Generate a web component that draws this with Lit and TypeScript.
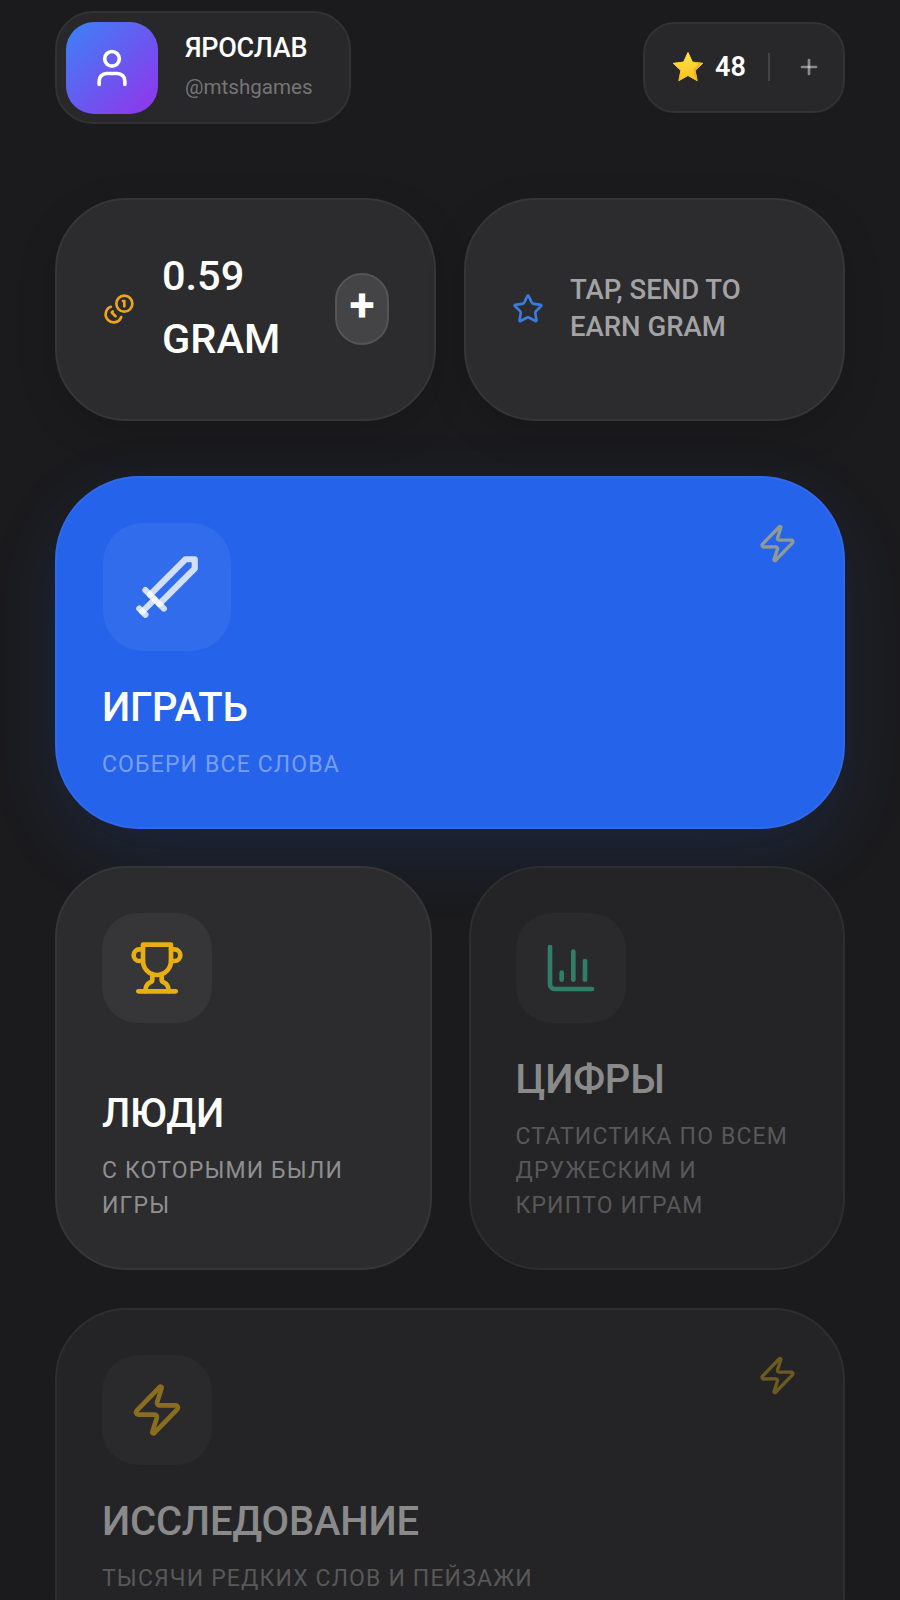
import { LitElement, html, css, svg } from "lit";
import { customElement } from "lit/decorators.js";

const icon = (size: number, body: unknown, cls = "") => html`<svg class=${cls} width=${size} height=${size} viewBox="0 0 24 24" fill="none" stroke="currentColor" stroke-width="2" stroke-linecap="round" stroke-linejoin="round">${body}</svg>`;

const zap = svg`<path d="M4 14a1 1 0 0 1-.78-1.63l9.9-10.2a.5.5 0 0 1 .86.46l-1.92 6.02A1 1 0 0 0 13 10h7a1 1 0 0 1 .78 1.63l-9.9 10.2a.5.5 0 0 1-.86-.46l1.92-6.02A1 1 0 0 0 11 14z"/>`;
const user = svg`<path d="M19 21v-2a4 4 0 0 0-4-4H9a4 4 0 0 0-4 4v2"/><circle cx="12" cy="7" r="4"/>`;
const coins = svg`<circle cx="16" cy="8" r="6"/><path d="M5.91 10.37A6 6 0 1 0 13.66 18"/><path d="M15 6h1v4"/><path d="M7.29 13.88l-.7.71 2.82 2.82"/>`;
const star = svg`<path d="M11.53 2.3a.53.53 0 0 1 .95 0l2.31 4.68a2.12 2.12 0 0 0 1.6 1.16l5.17.76a.53.53 0 0 1 .29.9l-3.74 3.64a2.12 2.12 0 0 0-.61 1.88l.88 5.14a.53.53 0 0 1-.77.56l-4.62-2.43a2.12 2.12 0 0 0-1.97 0L6.4 21.01a.53.53 0 0 1-.77-.56l.88-5.14a2.12 2.12 0 0 0-.61-1.88L2.16 9.79a.53.53 0 0 1 .29-.9l5.17-.76a2.12 2.12 0 0 0 1.6-1.16z"/>`;
const sword = svg`<polyline points="14.5 17.5 3 6 3 3 6 3 17.5 14.5"/><line x1="13" x2="19" y1="19" y2="13"/><line x1="16" x2="20" y1="16" y2="20"/><line x1="19" x2="21" y1="21" y2="19"/>`;
const trophy = svg`<path d="M6 9H4.5a2.5 2.5 0 0 1 0-5H6"/><path d="M18 9h1.5a2.5 2.5 0 0 0 0-5H18"/><path d="M4 22h16"/><path d="M10 14.66V17c0 .55-.47.98-.97 1.21C7.85 18.75 7 20.24 7 22"/><path d="M14 14.66V17c0 .55.47.98.97 1.21C16.15 18.75 17 20.24 17 22"/><path d="M18 2H6v7a6 6 0 0 0 12 0V2Z"/>`;
const chart = svg`<path d="M3 3v16a2 2 0 0 0 2 2h16"/><path d="M18 17V9"/><path d="M13 17V5"/><path d="M8 17v-3"/>`;
const plus = svg`<path d="M5 12h14" stroke-width="2.7"/><path d="M12 5v14" stroke-width="2.7"/>`;

@customElement("app-root")
export class AppRoot extends LitElement {
  static styles = css`
    :host {
      display: block;
      height: 1600px;
      overflow: hidden;
      background: #1b1b1d;
      font-family: Roboto, "Liberation Sans", sans-serif;
      color: #fff;
    }
    * { box-sizing: border-box; }
    .page { padding: 11px 55px 0; display: flex; flex-direction: column; }
    .header { display: flex; justify-content: space-between; align-items: center; height: 113px; }
    .user {
      display: flex; align-items: center; width: 296px; height: 113px; padding: 0 9px;
      gap: 27px; background: #28282a; border: 2px solid #323234; border-radius: 38px;
    }
    .avatar {
      width: 92px; height: 92px; border-radius: 28px; flex: none;
      display: flex; align-items: center; justify-content: center;
      background: linear-gradient(135deg, #3b82f6, #9333ea);
    }
    .who { padding-bottom: 3px; }
    .name { font-size: 27px; font-weight: 500; line-height: 36px; letter-spacing: -0.3px; }
    .handle { font-size: 20.6px; line-height: 30px; color: #757577; margin-top: 6px; }
    .stars {
      display: flex; align-items: center; width: 202px; height: 91px; padding: 0 0 2px 27px;
      background: #28282a; border: 2px solid #323234; border-radius: 32px;
    }
    .star-emoji { display: block; flex: none; }
    .count { font-size: 27px; font-weight: 600; margin-left: 11px; line-height: 34px; }
    .divider { width: 2px; height: 28px; background: #444446; margin-left: 22px; }
    .plus-s { margin-left: 27px; color: rgba(255,255,255,.45); display: flex; }

    .row { display: flex; margin-top: 74px; gap: 28px; }
    .mini {
      flex: 1; height: 223px; display: flex; align-items: center; padding: 0 45px 2px 46px;
      background: #2c2c2e; border: 2px solid #363638; border-radius: 72px;
      box-shadow: 0 12px 40px rgba(0,0,0,.14);
    }
    .mini svg { flex: none; }
    .coin { color: #eda51f; }
    .star-blue { color: #3b7be0; }
    .balance { flex: 1; margin-left: 27px; font-size: 41.5px; font-weight: 500; line-height: 63px; padding-bottom: 4px; }
    .add {
      flex: none; width: 54px; height: 72px; border-radius: 27px; background: #444446;
      border: 2px solid #555557; color: #fff; display: flex; justify-content: center;
      font-size: 46px; font-weight: 700; line-height: 60px;
    }
    .earn { flex: 1; margin-left: 26px; font-size: 27.5px; font-weight: 500; line-height: 36.5px; color: #a3a3a5; }

    .card {
      display: flex; flex-direction: column; position: relative;
      padding: 45px; border: 2px solid #363638; background: #2c2c2e; border-radius: 72px;
    }
    .play {
      margin-top: 55px; height: 353px; background: #2563eb; border-color: #3069ec; border-radius: 84px;
      box-shadow: 0 24px 70px rgba(37,99,235,.14);
    }
    .tile {
      width: 110px; height: 110px; border-radius: 36px; display: flex; align-items: center; justify-content: center;
      background: rgba(255,255,255,.05); flex: none;
    }
    .tile.big { width: 128px; height: 128px; border-radius: 40px; background: rgba(255,255,255,.06); margin-left: 1px; }
    .title { margin-top: 33px; font-size: 40px; font-weight: 500; line-height: 48px; letter-spacing: -0.2px; }
    .sub { margin-top: 16px; font-size: 23px; line-height: 34.4px; letter-spacing: 1.15px; color: #8f8f91; }
    .play .sub { color: rgba(255,255,255,.4); }
    .corner { position: absolute; top: 45px; right: 45px; display: flex; }
    .play .corner { color: #8d9a96; }
    .sword { transform: scaleX(-1); }
    .sword * { stroke: rgba(255,255,255,.78); }
    .duo { display: flex; margin-top: 37px; gap: 37px; }
    .duo .card { flex: 1; }
    .people .title { margin-top: auto; }
    .dim { background: #242426; border-color: #2e2e30; }
    .dim .title { color: #8a8a8b; }
    .dim .sub { color: #585859; }
    .dim .tile { background: #2a2a2c; }
    .trophy { color: #e8ae12; }
    .chart { color: #2f7e65; }
    .zap-y { color: #8a6d1e; }
    .wide { margin-top: 38px; height: 360px; }
    .corner.zap-y { color: #6d5a20; }
  `;

  render() {
    return html`<div class="page">
      <div class="header">
        <div class="user">
          <div class="avatar">${icon(44, user)}</div>
          <div class="who">
            <div class="name">ЯРОСЛАВ</div>
            <div class="handle">@mtshgames</div>
          </div>
        </div>
        <div class="stars">
          <svg class="star-emoji" width="32" height="32" viewBox="0 0 32 32">
            <defs><linearGradient id="st" x1="0" y1="0" x2="0" y2="1"><stop offset="0" stop-color="#ffe24d"/><stop offset="1" stop-color="#fcc21b"/></linearGradient></defs>
            <path d="M16 1.5l4.4 9.6 10.4 1.2-7.7 7.1 2.1 10.3L16 24.5l-9.2 5.2 2.1-10.3-7.7-7.1 10.4-1.2z" fill="url(#st)" stroke="url(#st)" stroke-width="1" stroke-linejoin="round"/>
            <path d="M20.4 11.1l10.4 1.2-7.7 7.1 2.1 10.3-3-5.6-.6-6.3 5-4.2z" fill="#f2a81d" opacity=".75"/>
          </svg>
          <div class="count">48</div>
          <div class="divider"></div>
          <div class="plus-s">${icon(24, plus)}</div>
        </div>
      </div>

      <div class="row">
        <div class="mini">
          ${icon(32, coins, "coin")}
          <div class="balance">0.59 GRAM</div>
          <div class="add">+</div>
        </div>
        <div class="mini">
          ${icon(32, star, "star-blue")}
          <div class="earn">TAP, SEND TO EARN GRAM</div>
        </div>
      </div>

      <div class="card play">
        <div class="corner">${icon(41, zap)}</div>
        <div class="tile big">${icon(74, sword, "sword")}</div>
        <div class="title">ИГРАТЬ</div>
        <div class="sub">СОБЕРИ ВСЕ СЛОВА</div>
      </div>

      <div class="duo">
        <div class="card people">
          <div class="tile">${icon(56, trophy, "trophy")}</div>
          <div class="title">ЛЮДИ</div>
          <div class="sub">С КОТОРЫМИ БЫЛИ ИГРЫ</div>
        </div>
        <div class="card dim">
          <div class="tile">${icon(56, chart, "chart")}</div>
          <div class="title">ЦИФРЫ</div>
          <div class="sub">СТАТИСТИКА ПО ВСЕМ ДРУЖЕСКИМ И КРИПТО ИГРАМ</div>
        </div>
      </div>

      <div class="card dim wide">
        <div class="corner zap-y">${icon(41, zap)}</div>
        <div class="tile">${icon(56, zap, "zap-y")}</div>
        <div class="title">ИССЛЕДОВАНИЕ</div>
        <div class="sub">ТЫСЯЧИ РЕДКИХ СЛОВ И ПЕЙЗАЖИ</div>
      </div>
    </div>`;
  }
}
